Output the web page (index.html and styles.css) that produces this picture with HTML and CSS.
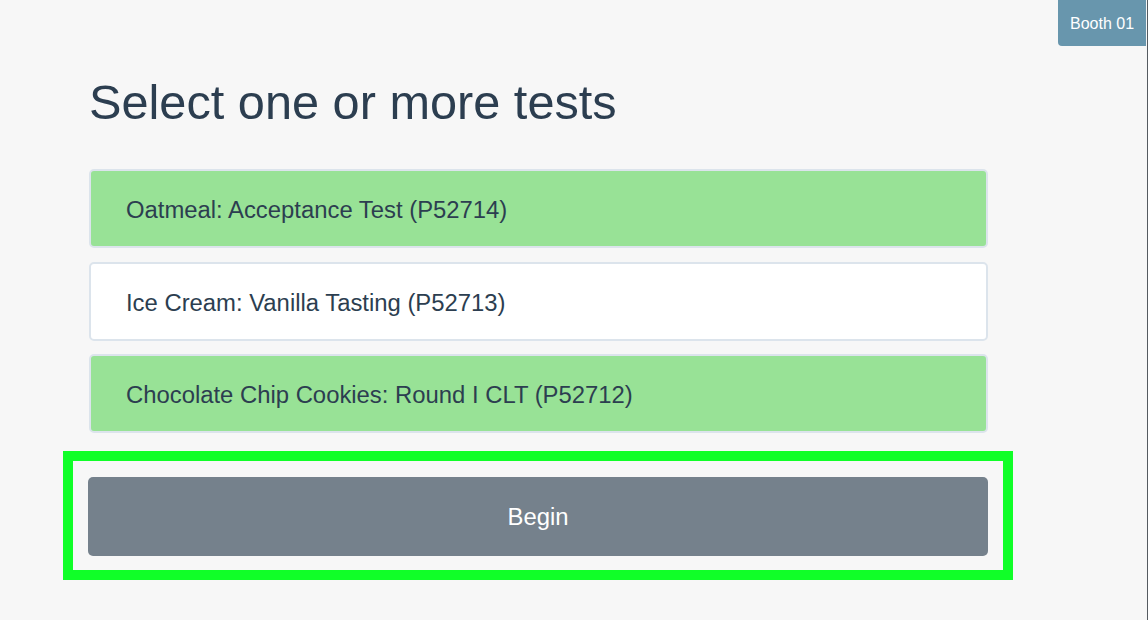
FILE: index.html
```html
<!DOCTYPE html>
<html lang="en">
<head>
<meta charset="utf-8">
<title>Select tests</title>
<link rel="stylesheet" href="styles.css">
</head>
<body>
<div class="booth">Booth 01</div>
<main class="page">
  <h1 class="title">Select one or more tests</h1>
  <div class="tests">
    <div class="test selected">Oatmeal: Acceptance Test (P52714)</div>
    <div class="test">Ice Cream: Vanilla Tasting (P52713)</div>
    <div class="test selected">Chocolate Chip Cookies: Round I CLT (P52712)</div>
  </div>
  <div class="highlight">
    <button class="begin" type="button">Begin</button>
  </div>
</main>
</body>
</html>
```

FILE: styles.css
```css
* {
  box-sizing: border-box;
}

html,
body {
  margin: 0;
  height: 100%;
}

body {
  background: #f7f7f7;
  font-family: "Liberation Sans", Arial, sans-serif;
  color: #2c3e50;
  border-right: 1px solid #555b60;
  position: relative;
  overflow: hidden;
}

.booth {
  position: absolute;
  top: 0;
  right: 1px;
  width: 88px;
  height: 46px;
  padding-top: 1px;
  background: #6896ad;
  color: #ffffff;
  font-size: 16px;
  display: flex;
  align-items: center;
  justify-content: center;
  border-bottom-left-radius: 4px;
}

.page {
  padding: 73px 0 0 88px;
  width: 988px;
}

.title {
  margin: 0 0 38px 1px;
  font-size: 48.7px;
  line-height: 58px;
  font-weight: 400;
  color: #2c3e50;
}

.tests {
  display: flex;
  flex-direction: column;
  gap: 13.5px;
  padding-left: 1px;
}

.test {
  height: 79px;
  display: flex;
  align-items: center;
  padding: 3px 0 0 35px;
  background: #ffffff;
  border: 2px solid #dce4ec;
  border-radius: 5px;
  font-size: 23.85px;
  color: #2c3e50;
}

.test.selected {
  background: #98e296;
}

.highlight {
  margin: 18px 0 0 -25px;
  width: 950px;
  border: 10px solid #10ff28;
  padding: 16px 15px 14px 15px;
}

.begin {
  display: block;
  width: 900px;
  height: 79px;
  padding-top: 2px;
  border: 0;
  border-radius: 5px;
  background: #75818c;
  color: #ffffff;
  font-family: "Liberation Sans", Arial, sans-serif;
  font-size: 23.85px;
  cursor: pointer;
}
```
